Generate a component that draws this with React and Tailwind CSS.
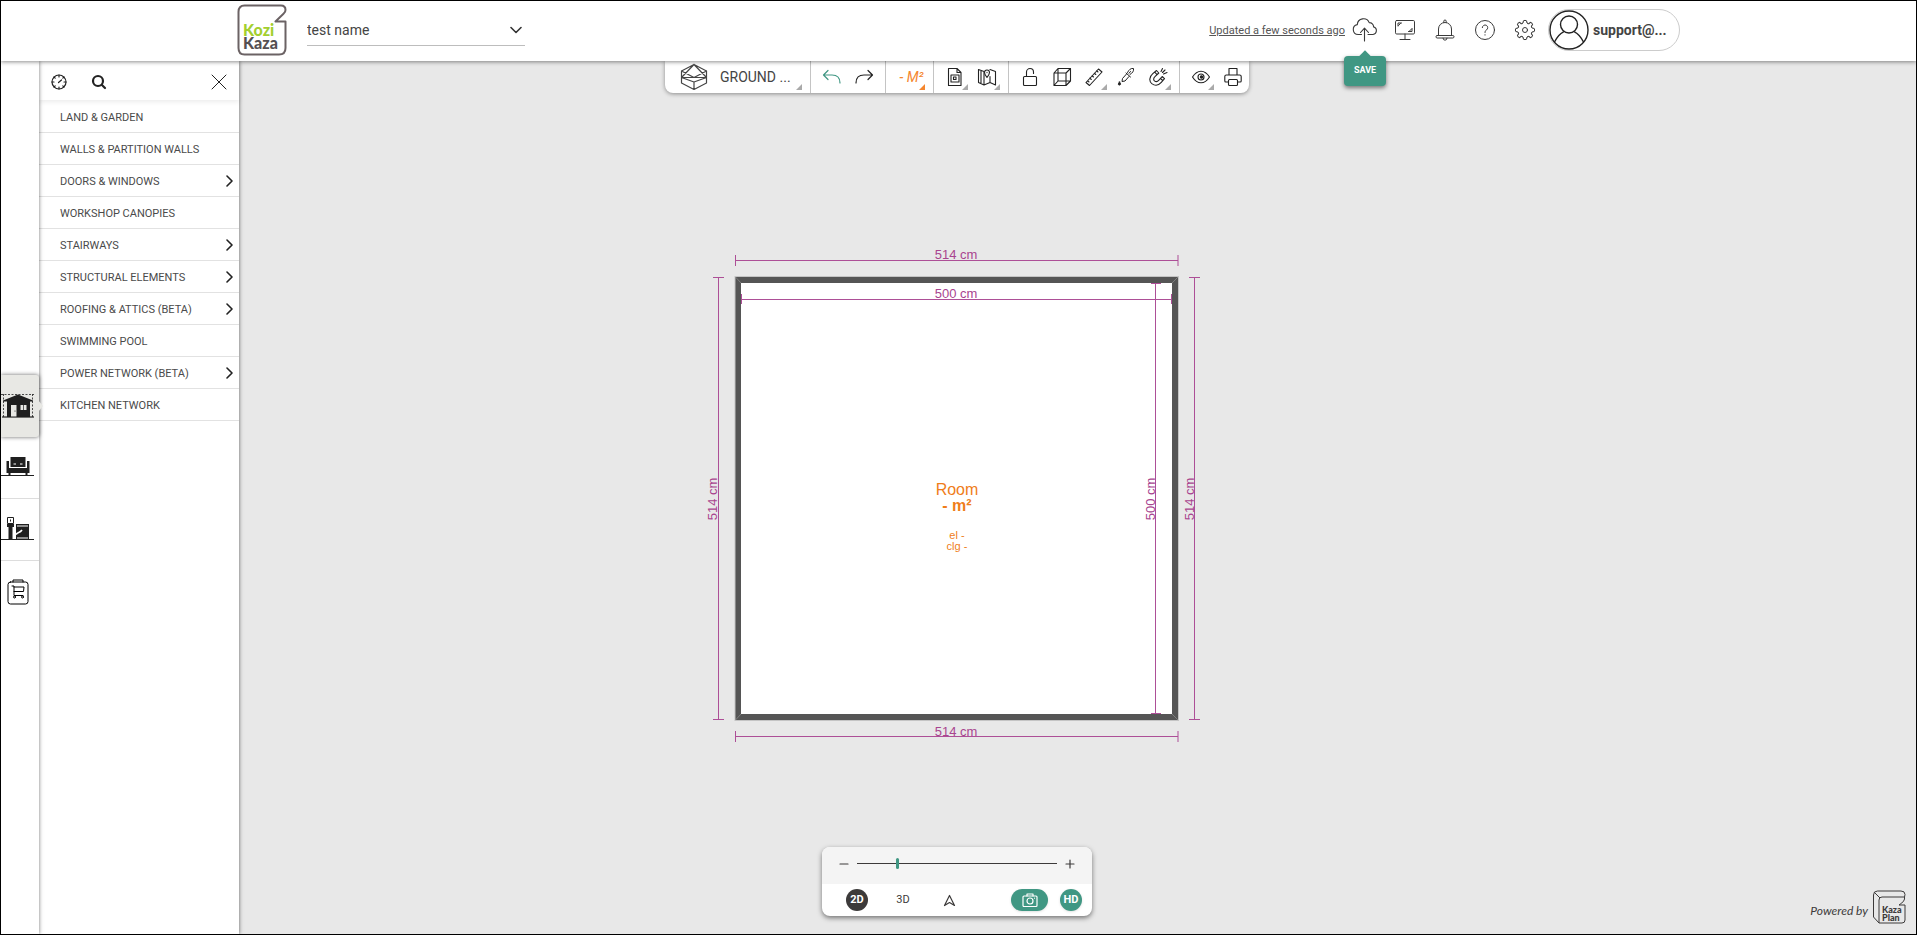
import clsx from "clsx";

const categories = [
  { label: "Land & garden" },
  { label: "Walls & partition walls" },
  { label: "Doors & windows", nested: true },
  { label: "Workshop canopies" },
  { label: "Stairways", nested: true },
  { label: "Structural elements", nested: true },
  { label: "Roofing & attics (beta)", nested: true },
  { label: "Swimming pool" },
  { label: "Power network (beta)", nested: true },
  { label: "Kitchen network" },
];

function Icon({ size = 20, box = 20, width = 1, className, children }) {
  return (
    <svg
      width={size}
      height={size}
      viewBox={`0 0 ${box} ${box}`}
      fill="none"
      stroke="currentColor"
      strokeWidth={width}
      strokeLinecap="round"
      strokeLinejoin="round"
      aria-hidden="true"
      className={clsx("shrink-0", className)}
    >
      {children}
    </svg>
  );
}

const CloudIcon = () => (
  <Icon size={26} box={26} width={1.1}>
    <path d="M9.5 17.5H6.2a5 5 0 0 1-.9-9.9A6.2 6.2 0 0 1 17.2 5.6a4.2 4.2 0 0 1 4.4 4.3 3.9 3.9 0 0 1-.6 7.600H16" />
    <path d="M12.500 24V11.500M8.500 15.500l4-4.300 4 4.300" />
  </Icon>
);

const ScreenIcon = () => (
  <Icon size={22} box={22}>
    <rect x="1.500" y="1.500" width="19" height="13.500" rx="1.200" />
    <path d="M11 15v5.500M6 20.500h10M4 7V4h3.500M18 9.500v3h-3.500M4.500 6.500l2-2M15.500 12l2-2" />
  </Icon>
);

const BellIcon = () => (
  <Icon size={22} box={22}>
    <path d="M4.500 16.500V10a6.500 6.500 0 0 1 13 0v6.500M9.800 3.500V2.200a1.200 1.200 0 0 1 2.400 0v1.300M9 19.200a2 2 0 0 0 4 0" />
    <rect x="2" y="16.500" width="18" height="2.500" rx="1.200" />
  </Icon>
);

const HelpIcon = () => (
  <Icon size={22} box={22}>
    <circle cx="11" cy="11" r="9.500" />
    <path d="M8.300 8.600a2.700 2.700 0 1 1 4.200 2.300c-1 .7-1.500 1.200-1.500 2.600M11 15.700v.4" />
  </Icon>
);

const GearIcon = () => (
  <Icon size={22} box={22}>
    <circle cx="11" cy="11" r="2.500" />
    {[0, 45, 90, 135, 180, 225, 270, 315].map((angle) => (
      <path
        key={angle}
        transform={`rotate(${angle} 11 11)`}
        d="M8.200 4.300Q9.300 4.300 9.300 3.200V1.900Q11 .7 12.700 1.900V3.200Q12.700 4.300 13.800 4.300"
      />
    ))}
  </Icon>
);

const UserIcon = () => (
  <Icon size={40} box={40} width={1.400}>
    <circle cx="20" cy="20" r="19" />
    <circle cx="20" cy="14.500" r="8.500" />
    <path d="M5.500 32c2.500-5 5.500-8.500 9-10.200M34.500 32c-2.500-5-5.500-8.500-9-10.200" />
  </Icon>
);

const LevelIcon = () => (
  <Icon size={28} box={28} width={1.200}>
    <path d="M14 1.500 26.500 8v12L14 26.500 1.500 20V8zM14 1.500 1.500 14.500M14 1.500l12.500 13M1.500 8 14 14.500 26.500 8M1.500 14.500h25M1.500 14.500 14 19l12.500-4.500M14 19v7.500" />
  </Icon>
);

const UndoIcon = () => (
  <Icon width={1.200}>
    <path d="M6 3.500 1.500 8 6 12.500M1.500 8H10c5 0 8 2.500 8 8" />
  </Icon>
);

const RedoIcon = () => (
  <Icon width={1.200}>
    <path d="M14 3.500 18.500 8 14 12.500M18.500 8H10c-5 0-8 2.500-8 8" />
  </Icon>
);

const PlanFileIcon = () => (
  <Icon width={1.100}>
    <path d="M3.500 1.500H12l4 4v13H3.500zM12 1.500v4h4M6 8h8v7H6zM8.500 10H11v2.500H8.500z" />
  </Icon>
);

const MapIcon = () => (
  <Icon width={1.100}>
    <path d="M7 4.500 1.500 2.500v13L7 18l6-2.500 5.500 2.500V4.500L13 2.500M7 4.500V18M13 9.500v6M4 4v12" />
    <path d="M10 10.500C8.500 8.500 7.500 7 7.500 5.500a2.500 2.500 0 0 1 5 0c0 1.500-1 3-2.500 5zM10 5.400v.2" />
  </Icon>
);

const LockIcon = () => (
  <Icon width={1.100}>
    <rect x="3.500" y="9.500" width="13" height="9" rx="1" />
    <path d="M6.500 9.500V5a3.500 3.500 0 0 1 7 0v1.500" />
  </Icon>
);

const CubeIcon = () => (
  <Icon width={1.100}>
    <path d="M2 6h12v12.500H2zM6 1.500h12.500V14H6zM2 6l4-4.500M14 6l4.500-4.500M14 18.500l4.500-4.500M2 18.500 6 14" />
  </Icon>
);

const RulerIcon = () => (
  <Icon width={1.100}>
    <path d="M2 15.500 14.500 2l3.500 3L5.500 18.500zM14 5l-1.500-1.200M11.800 7.500l-1.500-1.200M9.500 10 8 8.800M7.300 12.500l-1.500-1.300M5 15l-1.400-1.200" />
  </Icon>
);

const DropperIcon = () => (
  <Icon>
    <path d="m10 6 4.500 4M11.500 5.500c1.500-3 3.500-4.500 6-4 .5 2.500-1 4.500-3.500 6M10.500 7l-4 4.500-.5 3 3-.5 4-4.500M14.500 4.500l-1.500 1.800" />
    <path d="M3.500 15c1.100 1.400 1.500 2 .8 2.700-.8.700-2 .4-2-.6 0-.6.6-1.200 1.200-2.100z" fill="currentColor" />
  </Icon>
);

const MagnetIcon = () => (
  <Icon width={1.100}>
    <path d="M8.500 3.500 4.800 6.700c-3.800 3.300-3.800 7.600-1 9.900 3 2.300 6.800 1.800 9.500-1.200l3.200-3.700-2.300-2.200-3.300 3.700c-1.500 1.700-3.200 1.700-4.400.7-1.300-1.200-1-3 .7-4.500L10.800 6zM6.800 5.200 9 7.600M12.500 11.500l2.300 2M13 4.500l1.500-3M15.500 7 19 5.500M14.500 5.500 17 3" />
  </Icon>
);

const EyeIcon = () => (
  <Icon width={1.100}>
    <path d="M1.500 10C4 6 7 4.200 10 4.200S16 6 18.500 10C16 14 13 15.800 10 15.800S4 14 1.500 10z" />
    <circle cx="10" cy="10" r="3" />
    <circle cx="10.500" cy="10" r="1.200" fill="currentColor" />
  </Icon>
);

const PrinterIcon = () => (
  <Icon width={1.100}>
    <path d="M6 8V1.500h8V8M5.500 15H2.800A1 1 0 0 1 1.800 14V9.500Q1.800 8 3.300 8h13.400q1.500 0 1.500 1.500V14a1 1 0 0 1-1 1h-2.700" />
    <rect x="5.500" y="12.500" width="9" height="6" rx="1" />
  </Icon>
);

const CompassIcon = () => (
  <Icon size={16} box={16} width={1.200}>
    <circle cx="8" cy="8" r="7" />
    <path d="M8 1v2M8 13v2M1 8h2M13 8h2M3 3l1.200 1.200M13 3l-1.200 1.200M3 13l1.200-1.200M13 13l-1.200-1.200M7.500 8.500 10.500 6" />
  </Icon>
);

const HouseIcon = () => (
  <svg width="34" height="26" viewBox="0 0 34 26" className="text-[#1f1f1f]" aria-hidden="true">
    <path d="M0 1.500h33M2.500 1v24M31.500 1v24" fill="none" stroke="currentColor" strokeDasharray="2 1.500" strokeWidth=".8" />
    <path d="M17 1.500 32 7.500v1h-3V24H6V8.500H2v-1z" fill="currentColor" />
    <path d="M1 24h32" stroke="currentColor" strokeWidth="1.200" />
    <path d="M10 12h5.500v11.500H10zM19.500 12h6v5h-6z" fill="#e8e8e4" />
    <path d="M22.500 12v5" stroke="currentColor" strokeWidth=".7" />
    <circle cx="14" cy="18" r=".6" fill="currentColor" />
  </svg>
);

const SofaIcon = () => (
  <svg width="34" height="22" viewBox="0 0 34 22" className="text-[#1f1f1f]" aria-hidden="true">
    <path d="M9.500 1h15v10h-15z" fill="currentColor" />
    <path d="M5.500 5H8v7h18V5h2.500v12h-23zM7.500 17h2v2h-2zM24.500 17h2v2h-2z" fill="currentColor" />
    <path d="M12.500 8H15M19 8h2.500" stroke="#fff" strokeWidth="1" />
    <path d="M0 19.500h33" stroke="currentColor" strokeWidth="1" />
  </svg>
);

const DecorIcon = () => (
  <svg width="34" height="24" viewBox="0 0 34 24" className="text-[#1f1f1f]" aria-hidden="true">
    <path d="M6.500.5h6v6h-6zM9.500 2.500v2" fill="none" stroke="currentColor" />
    <path d="M6 7h7v3h-1.500v12h-4V10H6zM15 7h13v15.500H15z" fill="currentColor" />
    <path d="M16 9h11M16 21h11" stroke="#fff" strokeWidth="1" />
    <path d="M15 17.500c2-3 3.500-1 6-4.500" stroke="#fff" strokeWidth="1.600" fill="none" />
    <path d="M0 22.500h33" stroke="currentColor" strokeWidth="1.200" />
  </svg>
);

const CartIcon = () => (
  <Icon size={26} box={26}>
    <rect x="3" y="3" width="20" height="22" rx="2.500" />
    <path d="M8 3V1h10v2M7 7h2v9.500h9M9 8h10l-.5 4.500H9" />
    <circle cx="9.500" cy="18" r="1" />
    <circle cx="17.500" cy="18" r="1" />
  </Icon>
);

const rail = [
  { label: "Build", icon: HouseIcon, active: true },
  { label: "Furnish", icon: SofaIcon },
  { label: "Decorate", icon: DecorIcon },
  { label: "Shopping list", icon: CartIcon },
];

function Logo() {
  return (
    <a href="#" aria-label="Kozi Kaza" className="h-[52px] w-[50px] shrink-0">
      <svg width="50" height="52" viewBox="0 0 50 52" fontFamily="Lato, sans-serif" fontWeight="900" fontSize="16">
        <path
          d="M38.500 17.500H48.500V44q0 6.500-6.500 6.500H7.500Q1.500 50.500 1.500 44V8Q1.500 1.500 7.500 1.500H44q4.500 0 4.500 4.500c0 2-.8 2.800-2 3.800z"
          fill="#fff"
          stroke="#6b6264"
          strokeWidth="2"
          strokeLinejoin="round"
        />
        <text x="6" y="32" fill="#a3cf2f">Kozi</text>
        <text x="6" y="45" fill="#555052">Kaza</text>
      </svg>
    </a>
  );
}

function HeaderButton({ label, children }) {
  return (
    <button aria-label={label} className="flex h-10 w-10 items-center justify-center text-[#3a3a3a]">
      {children}
    </button>
  );
}

function Header() {
  return (
    <header className="relative z-30 flex h-[60px] items-center justify-between bg-white px-[236px] pb-0.5 shadow-[0_1px_4px_rgba(0,0,0,0.45)]">
      <div className="flex items-center gap-5">
        <Logo />
        <div className="relative">
          <select
            aria-label="Project"
            className="h-8 w-[218px] appearance-none border-b border-[#bdbdbd] bg-white text-sm text-[#444]"
          >
            <option>test name</option>
          </select>
          <Icon size={12} box={12} width={1.600} className="pointer-events-none absolute right-[3px] top-[10px] text-[#333]">
            <path d="M1 3.500 6 8.500l5-5" />
          </Icon>
        </div>
      </div>

      <div className="flex items-center">
        <a href="#" className="pt-0.5 text-[11px] text-[#555] underline">
          Updated a few seconds ago
        </a>
        <div className="relative">
          <HeaderButton label="Save">
            <CloudIcon />
          </HeaderButton>
          <span className="absolute left-1/2 top-[46px] flex h-[30px] w-[42px] -translate-x-1/2 items-center justify-center rounded-[4px] bg-[#409783] text-[9px] font-bold text-white shadow-[0_2px_4px_rgba(0,0,0,0.5)]">
            <span className="absolute -top-1 h-2 w-2 rotate-45 bg-[#409783]" />
            SAVE
          </span>
        </div>
        <HeaderButton label="Presentation">
          <ScreenIcon />
        </HeaderButton>
        <HeaderButton label="Notifications">
          <BellIcon />
        </HeaderButton>
        <HeaderButton label="Help">
          <HelpIcon />
        </HeaderButton>
        <HeaderButton label="Settings">
          <GearIcon />
        </HeaderButton>
        <button className="ml-[3px] flex h-[42px] w-[132px] items-center gap-1 rounded-full border border-[#ccc] text-sm font-bold text-[#444]">
          <span className="rounded-full text-[#222]">
            <UserIcon />
          </span>
          support@...
        </button>
      </div>
    </header>
  );
}

function Corner({ className }) {
  return (
    <svg width="6" height="6" viewBox="0 0 6 6" className={clsx("absolute bottom-[3px]", className)} aria-hidden="true">
      <path d="M6 0v6H0z" fill="currentColor" />
    </svg>
  );
}

function Tool({ label, menu, className, children }) {
  return (
    <button
      aria-label={label}
      className={clsx("relative flex h-8 w-8 items-center justify-center", className ?? "text-[#222]")}
    >
      {children}
      {menu && <Corner className="right-[3px] text-[#aaa]" />}
    </button>
  );
}

function Toolbar() {
  return (
    <div className="z-20 flex h-8 divide-x divide-[#c4c4c4] rounded-b-lg bg-white shadow-[0_1px_4px_rgba(0,0,0,0.4)]">
      <button className="relative flex w-[146px] items-center gap-3 pl-[15px] text-sm text-[#444]">
        <LevelIcon />
        GROUND ...
        <Corner className="right-2 text-[#aaa]" />
      </button>
      <div className="flex px-[5px]">
        <Tool label="Undo" className="text-[#409783]">
          <UndoIcon />
        </Tool>
        <Tool label="Redo">
          <RedoIcon />
        </Tool>
      </div>
      <button className="relative w-12 pl-1 text-sm italic text-[#f5862e]">
        - M²
        <Corner className="right-2" />
      </button>
      <div className="flex px-[5px]">
        <Tool label="Plan" menu>
          <PlanFileIcon />
        </Tool>
        <Tool label="Map" menu>
          <MapIcon />
        </Tool>
      </div>
      <div className="flex px-[5px]">
        <Tool label="Lock">
          <LockIcon />
        </Tool>
        <Tool label="Volume">
          <CubeIcon />
        </Tool>
        <Tool label="Measure" menu>
          <RulerIcon />
        </Tool>
        <Tool label="Pick material">
          <DropperIcon />
        </Tool>
        <Tool label="Snap" menu>
          <MagnetIcon />
        </Tool>
      </div>
      <div className="flex pl-[5px]">
        <Tool label="Display" menu>
          <EyeIcon />
        </Tool>
        <Tool label="Print">
          <PrinterIcon />
        </Tool>
      </div>
    </div>
  );
}

// Floor plan, drawn in canvas units
function FloorPlan() {
  return (
    <svg
      width="506"
      height="505"
      viewBox="704 245 506 505"
      fontFamily='"Liberation Sans", Arial, sans-serif'
      textAnchor="middle"
      role="img"
      aria-label="Floor plan"
    >
      <rect x="735" y="276.500" width="443.500" height="444" fill="#555" stroke="#c4c4c4" />
      <rect x="741" y="283" width="431" height="431" fill="#fff" />
      <path d="M735.500 277l5.500 6M1178 277l-6 6M735.500 720l5.500-6M1178 720l-6-6" stroke="#999" strokeWidth=".6" />
      <path
        d="M735.500 260.500h442.500M735.500 255v11M1178 255v11M735.500 736.500h442.500M735.500 731v11M1178 731v11M718.500 277v443M713 277.500h11M713 719.500h11M1194.500 277v443M1189 277.500h11M1189 719.500h11M741 299.500h431M741.500 294v10M1171.500 294v10M1155.500 283v431M1151 283.500h10M1151 713.500h10"
        fill="none"
        stroke="#ad4f97"
      />
      <g fill="#a8448f" fontSize="13">
        <text x="956" y="259">514 cm</text>
        <text x="956" y="298">500 cm</text>
        <text x="956" y="736">514 cm</text>
        <text transform="translate(717 499) rotate(-90)">514 cm</text>
        <text transform="translate(1155 499) rotate(-90)">500 cm</text>
        <text transform="translate(1194 499) rotate(-90)">514 cm</text>
      </g>
      <g fill="#ef7d1a">
        <text x="957" y="495" fontSize="16">Room</text>
        <text x="957" y="511" fontSize="16" fontWeight="700">- m²</text>
        <text x="957" y="539" fontSize="11">el -</text>
        <text x="957" y="550" fontSize="11">clg -</text>
      </g>
    </svg>
  );
}

function ViewControls() {
  return (
    <div className="mb-[18px] mt-auto w-[270px] overflow-hidden rounded-lg bg-white text-[#3c3a3a] shadow-[0_2px_5px_rgba(0,0,0,0.5)]">
      <div className="flex h-[37px] items-center justify-between bg-[#f4f4f4] px-4 pb-1">
        <button aria-label="Zoom out">
          <Icon size={12} box={12} width={1.200}>
            <path d="M2 6h8" />
          </Icon>
        </button>
        <input
          type="range"
          aria-label="Zoom"
          defaultValue="20"
          className="h-3 w-[200px] appearance-none bg-[linear-gradient(#3c3a3a,#3c3a3a)] bg-[length:100%_1px] bg-center bg-no-repeat [&::-webkit-slider-thumb]:h-[11px] [&::-webkit-slider-thumb]:w-[3px] [&::-webkit-slider-thumb]:appearance-none [&::-webkit-slider-thumb]:rounded-sm [&::-webkit-slider-thumb]:bg-[#409783]"
        />
        <button aria-label="Zoom in">
          <Icon size={12} box={12} width={1.200}>
            <path d="M2 6h8M6 2v8" />
          </Icon>
        </button>
      </div>
      <div className="flex h-8 items-center pl-6 pr-[10px] text-[11px]">
        <button className="h-[22px] w-[22px] rounded-full bg-[#3c3a3a] font-bold text-white">2D</button>
        <button className="ml-6 w-[22px]">3D</button>
        <button aria-label="First person" className="ml-6 flex w-[22px] justify-center">
          <Icon size={13} box={13} width={1.200}>
            <path d="M6.500 1.500 11.500 11.500 6.500 8.500 1.500 11.500z" />
          </Icon>
        </button>
        <button
          aria-label="Take picture"
          className="ml-auto flex h-[22px] w-[37px] items-center justify-center rounded-full bg-[#409783] text-white shadow-sm"
        >
          <Icon size={16} box={16} width={1.200}>
            <rect x="1" y="4" width="14" height="10.500" rx="1" />
            <path d="M5 4V2h6v2" />
            <circle cx="8" cy="9" r="3" />
            <path d="M12.500 6v.2" />
          </Icon>
        </button>
        <button className="ml-3 h-[22px] w-[22px] rounded-full bg-[#409783] font-bold text-white shadow-sm">HD</button>
      </div>
    </div>
  );
}

function Sidebar() {
  return (
    <aside className="z-10 col-start-1 row-start-1 flex justify-self-start">
      <nav className="z-10 flex w-[38px] flex-col justify-center bg-white pt-0.5 shadow-[0_0_4px_rgba(0,0,0,0.55)]">
        {rail.map(({ label, icon: Glyph, active }, i) => (
          <button
            key={label}
            aria-label={label}
            className={clsx(
              "relative flex h-[62px] items-center",
              active && "rounded-r-[3px] bg-[#e8e8e4] shadow-[0_0_4px_rgba(0,0,0,0.6)]",
              !active && i < rail.length - 1 && "border-b border-[#ddd]",
              i === rail.length - 1 && "pl-1"
            )}
          >
            <Glyph />
            {active && (
              <svg width="5" height="12" viewBox="0 0 5 12" className="absolute -right-1" aria-hidden="true">
                <path d="M0 0 5 6 0 12z" fill="#e8e8e4" />
              </svg>
            )}
          </button>
        ))}
      </nav>
      <div className="w-[200px] bg-white shadow-[0_0_4px_rgba(0,0,0,0.6)]">
        <div className="flex h-[39px] items-center px-3 pt-0.5 text-[#222] shadow-[0_2px_5px_rgba(0,0,0,0.08)]">
          <button aria-label="Catalogue">
            <CompassIcon />
          </button>
          <button aria-label="Search" className="ml-6">
            <Icon size={16} box={16} width={2.200}>
              <circle cx="7" cy="7" r="5" />
              <path d="m11 11 3 3" />
            </Icon>
          </button>
          <button aria-label="Close" className="ml-auto">
            <Icon size={16} box={16}>
              <path d="m1 1 14 14M15 1 1 15" />
            </Icon>
          </button>
        </div>
        <ul className="pt-px">
          {categories.map(({ label, nested }) => (
            <li key={label} className="border-b border-[#e2e2e2]">
              <button className="flex h-[31px] w-full items-center justify-between pl-[21px] pr-1 text-[11px] uppercase text-[#4a4a4a]">
                <span className="pt-1">{label}</span>
                {nested && (
                  <Icon size={12} box={12} width={1.600} className="text-[#222]">
                    <path d="m4 1 5 5-5 5" />
                  </Icon>
                )}
              </button>
            </li>
          ))}
        </ul>
      </div>
    </aside>
  );
}

function PoweredBy() {
  return (
    <a
      href="#"
      className="z-10 col-start-1 row-start-1 mb-[10px] mr-[10px] flex items-center gap-1 self-end justify-self-end text-[#3c3a3a]"
    >
      <span className="pt-2 font-[Lato,cursive] text-xs italic">Powered by</span>
      <svg width="34" height="34" viewBox="0 0 34 34" fontFamily="Lato, sans-serif" fontWeight="900" fontSize="9" fill="currentColor" aria-hidden="true">
        <path
          d="M1.500 27V5q0-4 4-4H29q4 0 4 3.500M1.500 27 7 33V10q0-3 3-3h22.500q1 4-5.500 8h6v15q0 3-3 3H7M2.500 2.500 8 8M33 4.500 32.500 7"
          fill="none"
          stroke="currentColor"
        />
        <text x="10" y="23">Kaza</text>
        <text x="10" y="31">Plan</text>
      </svg>
    </a>
  );
}

export default function App() {
  return (
    <div className="flex min-h-screen flex-col border border-black bg-[#e8e8e8] font-[Roboto,sans-serif]">
      <Header />
      <div className="grid flex-1">
        <main className="col-start-1 row-start-1 flex flex-col items-center pr-[3px]">
          <Toolbar />
          <div className="mt-[152px]">
            <FloorPlan />
          </div>
          <ViewControls />
        </main>
        <Sidebar />
        <PoweredBy />
      </div>
    </div>
  );
}
